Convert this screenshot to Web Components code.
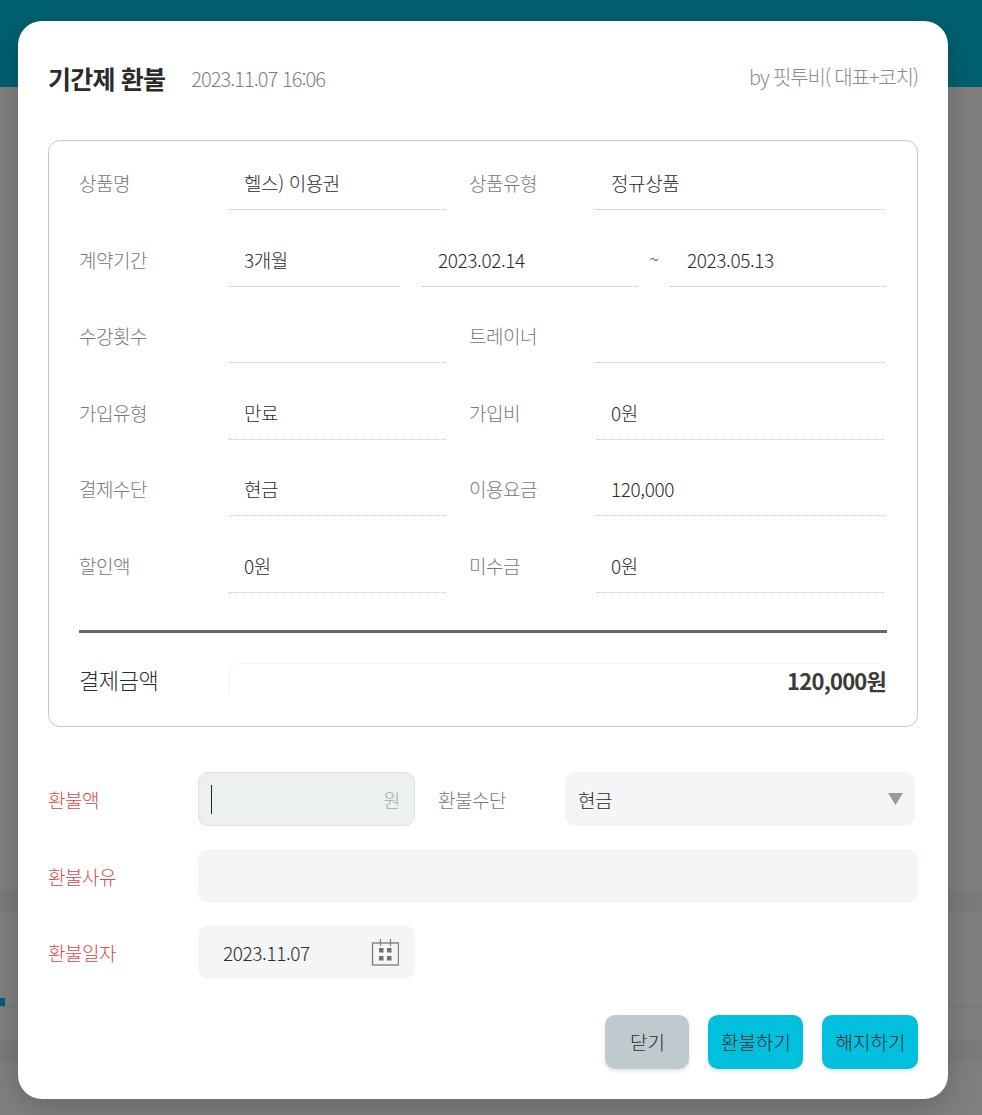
<!DOCTYPE html>
<html lang="ko">
<head>
<meta charset="utf-8">
<title>기간제 환불</title>
<style>
    html, body { margin: 0; padding: 0; }
    body {
        width: 982px;
        height: 1115px;
        overflow: hidden;
        font-family: "Noto Sans CJK KR", "Noto Sans", sans-serif;
    }
</style>
</head>
<body>
<page-backdrop></page-backdrop>
<refund-modal>
    <span slot="title">기간제 환불</span>
    <span slot="stamp">2023.11.07 16:06</span>
    <span slot="author">by 핏투비( 대표+코치)</span>

    <info-card slot="card">
        <info-row>
            <span slot="label">상품명</span>
            <info-value>헬스) 이용권</info-value>
            <span slot="label2">상품유형</span>
            <info-value slot="second">정규상품</info-value>
        </info-row>
        <period-row></period-row>
        <info-row>
            <span slot="label">수강횟수</span>
            <info-value></info-value>
            <span slot="label2">트레이너</span>
            <info-value slot="second"></info-value>
        </info-row>
        <info-row>
            <span slot="label">가입유형</span>
            <info-value>만료</info-value>
            <span slot="label2">가입비</span>
            <info-value slot="second">0원</info-value>
        </info-row>
        <info-row>
            <span slot="label">결제수단</span>
            <info-value>현금</info-value>
            <span slot="label2">이용요금</span>
            <info-value slot="second">120,000</info-value>
        </info-row>
        <info-row>
            <span slot="label">할인액</span>
            <info-value>0원</info-value>
            <span slot="label2">미수금</span>
            <info-value slot="second">0원</info-value>
        </info-row>
    </info-card>

    <refund-form slot="form"></refund-form>

    <modal-button slot="actions" tone="gray" width="84">닫기</modal-button>
    <modal-button slot="actions" width="95">환불하기</modal-button>
    <modal-button slot="actions" width="96">해지하기</modal-button>
</refund-modal>

<script>
function define(name, html, setup) {
    const template = document.createElement('template');
    template.innerHTML = html;
    customElements.define(name, class extends HTMLElement {
        constructor() {
            super();
            this.attachShadow({ mode: 'open' });
            this.shadowRoot.appendChild(template.content.cloneNode(true));
            if (setup) setup(this);
        }
    });
}

// what is left of the app behind the dimmed overlay
define('page-backdrop', `
    <style>
        :host { display: block; position: absolute; inset: 0; background: #7f7f7f; overflow: hidden; }
        .top { height: 87px; background: #016070; }
        .dash { height: 413px; border-bottom: 1px dashed #757575; margin-left: 948px; }
        .band { height: 22px; margin-top: 389px; background: #7b7b7b; }
        .foot { height: 95px; display: flex; border-bottom: 1px solid #737373; box-sizing: border-box; align-items: flex-end; }
        .foot i { display: block; width: 5px; height: 8px; background: #016070; }
        .band2 { height: 22px; margin-top: 33px; background: #7b7b7b; }
    </style>
    <div class="top"></div>
    <div class="dash"></div>
    <div class="band"></div>
    <div class="foot"><i></i></div>
    <div class="band2"></div>
`);

define('refund-modal', `
    <style>
        :host {
            display: block;
            position: absolute;
            left: 18px;
            top: 21px;
            width: 930px;
            height: 1078px;
            box-sizing: border-box;
            padding: 0 30px;
            background: #fff;
            border-radius: 24px;
            box-shadow: 0 8px 30px rgba(0, 0, 0, 0.2);
            color: #333;
        }
        header { display: flex; align-items: flex-start; height: 119px; }
        .title { font-size: 25px; font-weight: 700; line-height: 36px; margin-top: 39px; letter-spacing: -0.8px; color: #2b2b2b; }
        .stamp { font-size: 20px; line-height: 30px; margin: 43px 0 0 26px; letter-spacing: -0.95px; color: #7f7f7f; font-weight: 300; }
        .author { font-size: 20px; line-height: 30px; margin: 41px 0 0 auto; letter-spacing: -1.15px; color: #8c8c8c; font-weight: 300; }
        .actions { display: flex; justify-content: flex-end; gap: 19px; margin-top: 36px; }
    </style>
    <header>
        <div class="title"><slot name="title"></slot></div>
        <div class="stamp"><slot name="stamp"></slot></div>
        <div class="author"><slot name="author"></slot></div>
    </header>
    <slot name="card"></slot>
    <slot name="form"></slot>
    <div class="actions"><slot name="actions"></slot></div>
`);

define('info-card', `
    <style>
        :host {
            display: block;
            box-sizing: border-box;
            height: 587px;
            padding: 0 30px;
            border: 1px solid #c9c9c9;
            border-radius: 12px;
        }
        .rows { display: flex; flex-direction: column; gap: 22.6px; padding-top: 15px; }
        hr { height: 3px; margin: 37px 0 0; border: 0; background: #666; }
        .total { display: flex; align-items: flex-start; margin-top: 30px; }
        .total span { width: 150px; font-size: 22px; line-height: 33px; letter-spacing: -0.4px; color: #2b2b2b; font-weight: 300; }
        .total b {
            flex: 1;
            height: 30px;
            line-height: 32px;
            font-size: 22px;
            font-weight: 700;
            letter-spacing: -0.8px;
            text-align: right;
            color: #3a3a3a;
            border: 1px solid #f4f4f4;
            border-bottom: 0;
            border-radius: 10px 10px 0 0;
        }
    </style>
    <div class="rows"><slot></slot></div>
    <hr>
    <div class="total"><span>결제금액</span><b>120,000원</b></div>
`);

define('info-row', `
    <style>
        :host { display: grid; grid-template-columns: 150px 217px 150px 288px; column-gap: 0; height: 54px; align-items: start; }
        .label { font-size: 19px; font-weight: 300; line-height: 27px; padding-top: 13px; letter-spacing: -0.5px; color: #777; }
        .label.two { padding-left: 23px; width: 127px; }
        ::slotted(info-value[slot="second"]) { width: 288px; }
    </style>
    <div class="label"><slot name="label"></slot></div>
    <slot></slot>
    <div class="label two"><slot name="label2"></slot></div>
    <slot name="second"></slot>
`);

define('info-value', `
    <style>
        :host {
            display: block;
            box-sizing: border-box;
            height: 54px;
            padding: 13px 14px 0 15px;
            font-size: 19px;
            font-weight: 300;
            line-height: 27px;
            letter-spacing: -0.4px;
            color: #2b2b2b;
            border-bottom: 1px dotted #c4c4c4;
        }
    </style>
    <slot></slot>
`);

define('period-row', `
    <style>
        :host { display: flex; height: 54px; }
        .label { width: 150px; font-size: 19px; font-weight: 300; line-height: 27px; padding-top: 13px; letter-spacing: -0.5px; color: #777; }
        .tilde { width: 32px; font-size: 18px; font-weight: 300; line-height: 27px; padding-top: 12px; text-align: center; color: #444; }
        info-value { flex: none; }
    </style>
    <div class="label">계약기간</div>
    <info-value style="width:171px">3개월</info-value>
    <info-value style="width:216px;margin-left:22px;padding-left:16px">2023.02.14</info-value>
    <div class="tilde">~</div>
    <info-value style="width:216px;padding-left:17px">2023.05.13</info-value>
`);

define('refund-form', `
    <style>
        :host { display: block; padding-top: 45px; }
        .row { display: flex; align-items: center; height: 54px; margin-bottom: 23px; }
        .row + .row { margin-bottom: 22px; }
        .label { width: 150px; font-size: 19px; font-weight: 300; letter-spacing: -0.5px; line-height: 27px; color: #d64a4a; }
        .field {
            box-sizing: border-box;
            height: 54px;
            display: flex;
            align-items: center;
            background: #f4f5f6;
            border-radius: 10px;
            font-size: 19px;
            font-weight: 300;
            letter-spacing: -0.4px;
            color: #2b2b2b;
        }
        .amount { width: 217px; padding: 0 14px 0 12px; background: #edf0f1; border: 1px solid #dce0e2; }
        .caret { width: 1px; height: 29px; background: #222; }
        .unit { margin-left: auto; color: #aaa; }
        .sub { box-sizing: border-box; width: 150px; padding-left: 23px; font-size: 19px; font-weight: 300; letter-spacing: -0.5px; color: #777; }
        .method { width: 350px; padding: 0 12px 0 13px; }
        .method svg { margin-left: auto; }
        .reason { width: 720px; }
        .date { width: 217px; padding: 0 16px 0 25px; }
        .date svg { margin-left: auto; }
    </style>
    <div class="row">
        <div class="label">환불액</div>
        <div class="field amount"><i class="caret"></i><span class="unit">원</span></div>
        <div class="sub">환불수단</div>
        <div class="field method">현금
            <svg width="15" height="12" viewBox="0 0 15 12"><path d="M0 0h15L7.5 12z" fill="#999"/></svg>
        </div>
    </div>
    <div class="row">
        <div class="label">환불사유</div>
        <div class="field reason"></div>
    </div>
    <div class="row">
        <div class="label">환불일자</div>
        <div class="field date">2023.11.07
            <svg width="28" height="28" viewBox="0 0 28 28" fill="none">
                <rect x="1.5" y="5" width="26" height="22" stroke="#808080" stroke-width="1.4"/>
                <path d="M9.5 1v7M19.5 1v7" stroke="#808080" stroke-width="1.2"/>
                <path d="M8 10h4.5v4.5H8zM16 10h4.5v4.5H16zM8 18h4.5v4.5H8zM16 18h4.5v4.5H16z" fill="#707070"/>
            </svg>
        </div>
    </div>
`);

define('modal-button', `
    <style>
        :host {
            display: flex;
            align-items: center;
            justify-content: center;
            box-sizing: border-box;
            height: 54px;
            padding: 0 0 2px 1px;
            background: #00c0de;
            border-radius: 10px;
            box-shadow: 0 2px 4px rgba(0, 0, 0, 0.12);
            font-size: 19px;
            font-weight: 300;
            color: #2b2b2b;
        }
        :host([tone="gray"]) { background: #bfcace; }
    </style>
    <slot></slot>
`, el => { el.style.width = el.getAttribute('width') + 'px'; });
</script>
</body>
</html>
